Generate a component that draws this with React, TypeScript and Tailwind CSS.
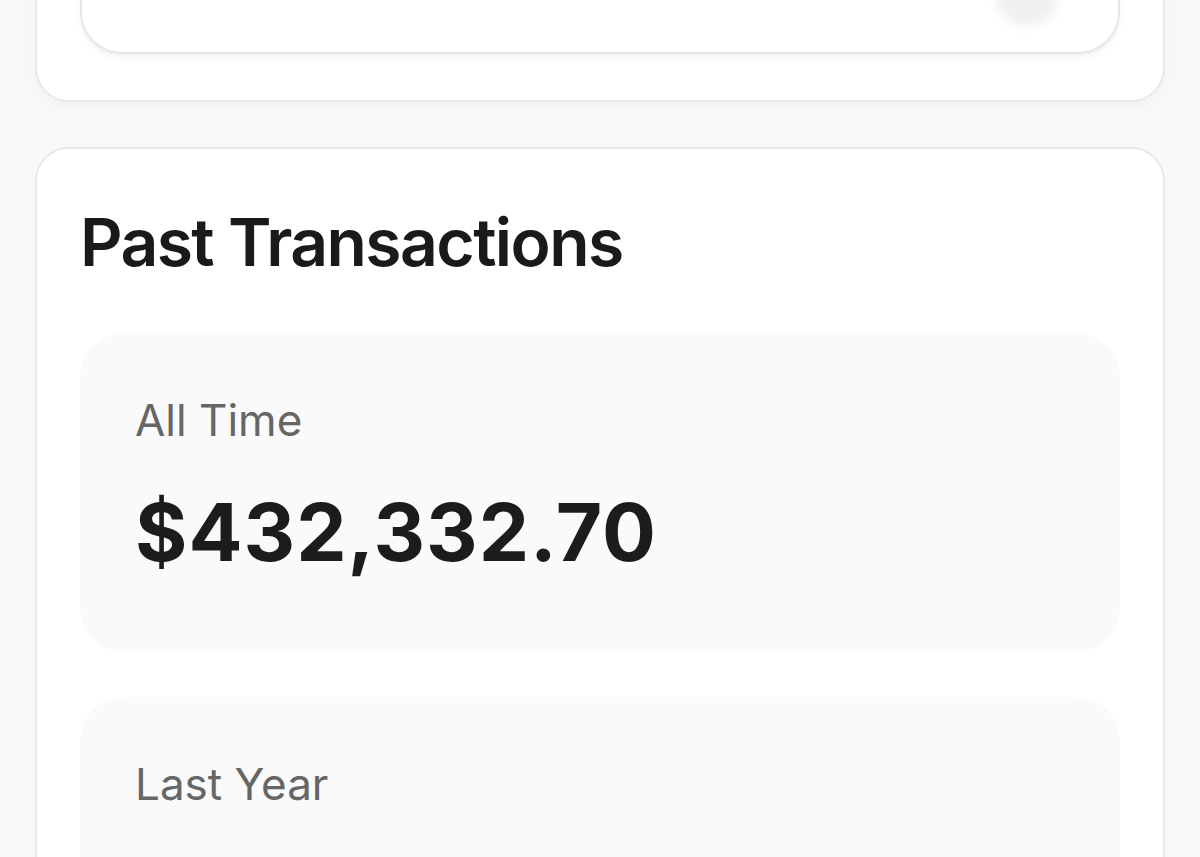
import React from "react";

function StatCard({ label, value }: { label: string; value?: string }) {
  return (
    <div className="min-h-[319px] rounded-[44px] bg-[#fafafa] px-[55px] pt-[59px] pb-[72px]">
      <div className="text-[44px] leading-[56px] text-[#666666] font-normal">{label}</div>
      {value && (
        <div className="mt-[36px] text-[80px] leading-[96px] font-bold text-[#1c1c1c] tracking-[1px]">{value}</div>
      )}
    </div>
  );
}

export default function App() {
  return (
    <div
      className="h-[857px] w-[1200px] overflow-hidden bg-[#f8f8f8]"
      style={{ fontFamily: "Inter, 'Noto Sans', sans-serif" }}
    >
      <div className="-mt-[198px] flex flex-col gap-[45px] px-[35px]">
        <div className="h-[300px] rounded-[34px] border-2 border-[#e8e8e8] bg-white px-[43px] pb-[46px] shadow-[0_4px_12px_rgba(0,0,0,0.03)] flex flex-col justify-end">
          <div className="relative h-[200px] overflow-hidden rounded-[42px] border-2 border-[#e6e6e6] bg-white shadow-[0_3px_6px_rgba(0,0,0,0.06)]">
            <div className="absolute right-[60px] top-[108px] h-[62px] w-[62px] rounded-full bg-[#f0f0f0] blur-[5px]" />
          </div>
        </div>
        <div className="rounded-[34px] border-2 border-[#e8e8e8] bg-white px-[43px] pt-[52px] pb-[60px]">
          <h2 className="text-[66px] leading-[82px] font-semibold text-[#1a1a1a] tracking-[-1.6px]">Past Transactions</h2>
          <div className="mt-[50px] flex flex-col gap-[45px]">
            <StatCard label="All Time" value="$432,332.70" />
            <StatCard label="Last Year" />
          </div>
        </div>
      </div>
    </div>
  );
}
